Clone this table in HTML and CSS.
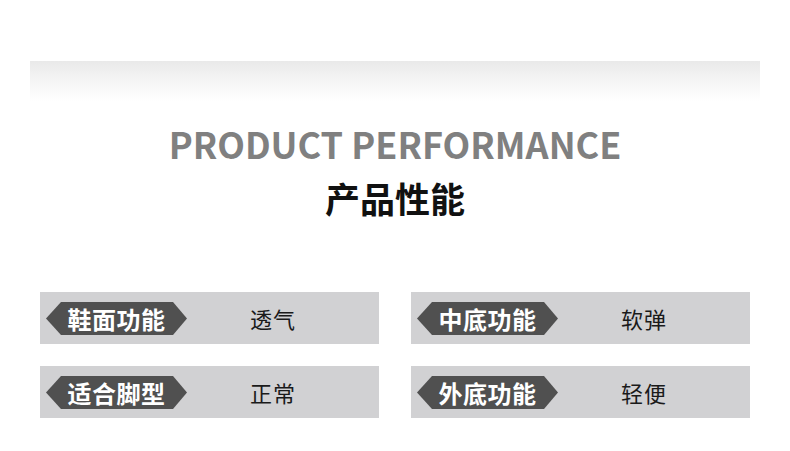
FILE: index.html
```html
<!DOCTYPE html>
<html lang="zh-CN">
<head>
<meta charset="utf-8">
<link rel="stylesheet" href="styles.css">
</head>
<body>
<div class="page">
  <div class="shade"></div>
  <h1 class="title-en">PRODUCT PERFORMANCE</h1>
  <h2 class="title-cn">产品性能</h2>
  <div class="grid">
    <div class="row"><span class="tag">鞋面功能</span><span class="val">透气</span></div>
    <div class="row"><span class="tag">中底功能</span><span class="val">软弹</span></div>
    <div class="row"><span class="tag">适合脚型</span><span class="val">正常</span></div>
    <div class="row"><span class="tag">外底功能</span><span class="val">轻便</span></div>
  </div>
</div>
</body>
</html>
```
FILE: styles.css
```css
html, body {
  margin: 0;
  padding: 0;
  background: #ffffff;
}
.page {
  width: 790px;
  height: 451px;
  overflow: hidden;
  font-family: "Noto Sans CJK SC", "Noto Sans", sans-serif;
}
.shade {
  margin: 61px 30px 0;
  height: 40px;
  background: linear-gradient(to bottom, #e9e9e9 0%, #f4f4f4 45%, #ffffff 100%);
}
.title-en {
  margin: 20px 0 0;
  text-align: center;
  font-size: 36px;
  line-height: 44px;
  font-weight: 700;
  color: #808080;
  letter-spacing: 0;
}
.title-cn {
  margin: 11px 0 0;
  text-align: center;
  font-size: 35px;
  line-height: 44px;
  font-weight: 700;
  color: #111111;
}
.grid {
  margin: 72px 40px 0;
  display: grid;
  grid-template-columns: 339px 339px;
  column-gap: 32px;
  row-gap: 22px;
}
.row {
  height: 52px;
  background: #d1d1d3;
  display: flex;
  align-items: center;
}
.tag {
  margin: 1px 0 0 6px;
  width: 141px;
  height: 33px;
  background: #505050;
  clip-path: polygon(0 50%, 15px 0, calc(100% - 14px) 0, 100% 50%, calc(100% - 14px) 100%, 15px 100%);
  color: #ffffff;
  font-weight: 700;
  font-size: 24px;
  line-height: 33px;
  letter-spacing: 0.5px;
  text-align: center;
}
.val {
  margin-left: 63px;
  font-size: 22px;
  color: #1a1a1a;
  letter-spacing: 1px;
}
```
